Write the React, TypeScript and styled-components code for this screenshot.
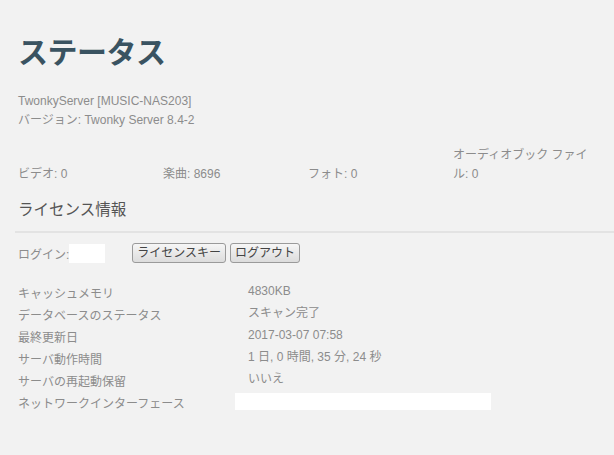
import styled, { createGlobalStyle } from "styled-components";

const GlobalStyle = createGlobalStyle`
  html, body {
    margin: 0;
    padding: 0;
    background: #f2f2f2;
  }
  body {
    font-family: "Liberation Sans", "Noto Sans CJK JP", sans-serif;
    color: #8c8c8c;
  }
`;

const stats = [
  { label: "ビデオ", value: "0" },
  { label: "楽曲", value: "8696" },
  { label: "フォト", value: "0" },
  { label: "オーディオブック ファイル", value: "0" },
];

const info = [
  { label: "キャッシュメモリ", value: "4830KB" },
  { label: "データベースのステータス", value: "スキャン完了" },
  { label: "最終更新日", value: "2017-03-07 07:58" },
  { label: "サーバ動作時間", value: "1 日, 0 時間, 35 分, 24 秒" },
  { label: "サーバの再起動保留", value: "いいえ" },
  { label: "ネットワークインターフェース", value: "", blank: true },
];

export default function App() {
  return (
    <Page>
      <GlobalStyle />
      <Title>ステータス</Title>

      <ServerInfo>
        <Line>TwonkyServer [MUSIC-NAS203]</Line>
        <Line>バージョン: Twonky Server 8.4-2</Line>
      </ServerInfo>

      <Stats>
        {stats.map((s) => (
          <Stat key={s.label}>
            {s.label}: {s.value}
          </Stat>
        ))}
      </Stats>

      <SectionTitle>ライセンス情報</SectionTitle>
      <Divider />

      <LoginRow>
        <LoginLabel>ログイン:</LoginLabel>
        <LoginField />
        <Buttons>
          <Button>ライセンスキー</Button>
          <Button>ログアウト</Button>
        </Buttons>
      </LoginRow>

      <InfoTable>
        {info.map((row) => (
          <InfoRow key={row.label}>
            <InfoLabel>{row.label}</InfoLabel>
            {row.blank ? <BlankValue /> : <InfoValue>{row.value}</InfoValue>}
          </InfoRow>
        ))}
      </InfoTable>
    </Page>
  );
}

const Page = styled.div`
  width: 614px;
  height: 455px;
  box-sizing: border-box;
  padding: 28px 16px 0 18px;
  overflow: hidden;
`;

const Title = styled.h1`
  margin: 0;
  font-family: "Noto Sans CJK JP", sans-serif;
  font-size: 30px;
  font-weight: 700;
  line-height: 44px;
  color: #3a5361;
  letter-spacing: -0.5px;
`;

const ServerInfo = styled.div`
  margin-top: 20px;
  font-size: 12px;
  line-height: 19px;
`;

const Line = styled.div``;

const Stats = styled.div`
  display: flex;
  align-items: flex-end;
  margin-top: 16px;
  font-size: 12px;
  line-height: 19px;
`;

const Stat = styled.div`
  width: 145px;
  box-sizing: border-box;
  padding-right: 6px;
`;

const SectionTitle = styled.h2`
  margin: 13px 0 0;
  font-family: "Noto Sans CJK JP", sans-serif;
  font-size: 15.5px;
  font-weight: 400;
  line-height: 22px;
  color: #555;
`;

const Divider = styled.div`
  height: 2px;
  margin: 12px -16px 0 -3px;
  background: #e3e3e3;
`;

const LoginRow = styled.div`
  display: flex;
  align-items: center;
  margin-top: 10px;
  font-size: 12px;
`;

const LoginLabel = styled.span``;

const LoginField = styled.span`
  width: 36px;
  height: 19px;
  background: #fff;
`;

const Buttons = styled.div`
  display: flex;
  gap: 4px;
  margin-left: 27px;
`;

const Button = styled.button`
  height: 20px;
  padding: 0 4px;
  font-family: "Liberation Sans", "Noto Sans CJK JP", sans-serif;
  font-size: 12px;
  color: #444;
  border: 1px solid #9a9a9a;
  border-radius: 3px;
  background: linear-gradient(#f6f6f6, #dcdcdc);
  line-height: 18px;
`;

const InfoTable = styled.div`
  margin-top: 20px;
  font-size: 12px;
`;

const InfoRow = styled.div`
  display: flex;
  align-items: flex-start;
  height: 22px;
`;

const InfoLabel = styled.div`
  width: 230px;
  padding-top: 3px;
  line-height: 16px;
`;

const InfoValue = styled.div`
  line-height: 16px;
`;

const BlankValue = styled.div`
  width: 256px;
  height: 17px;
  margin-left: -13px;
  margin-top: 0;
  background: #fff;
`;
